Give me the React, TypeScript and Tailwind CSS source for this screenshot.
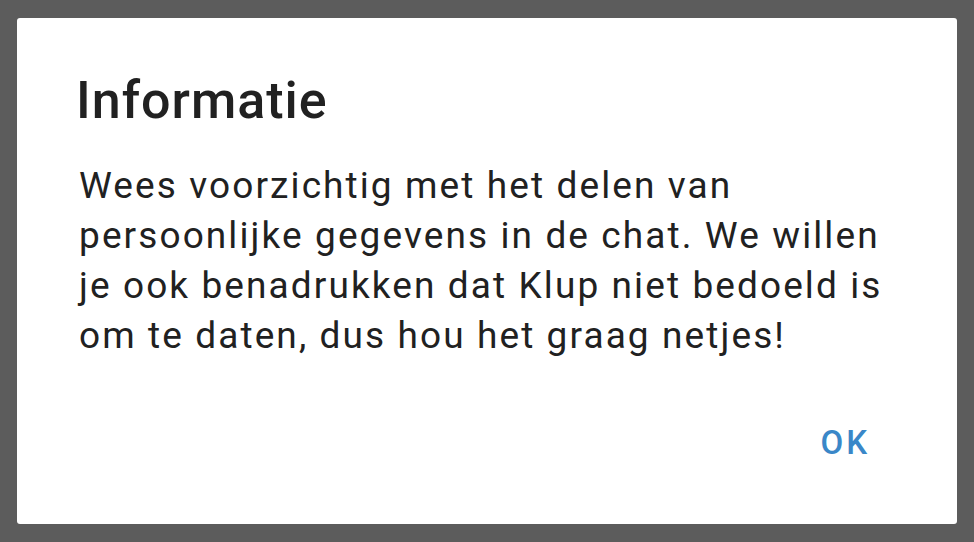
const lines = [
  "Wees voorzichtig met het delen van",
  "persoonlijke gegevens in de chat. We willen",
  "je ook benadrukken dat Klup niet bedoeld is",
  "om te daten, dus hou het graag netjes!",
];

export default function App() {
  return (
    <div className="w-[974px] h-[542px] bg-[#5c5c5c] pt-[18px] pl-[17px]">
      <div
        className="w-[940px] h-[506px] bg-white rounded-[3px] pt-[57px] pl-[62px] pr-[87px] flex flex-col"
        style={{ fontFamily: "Roboto, 'Noto Sans', sans-serif" }}
      >
        <h1 className="text-[52px] leading-[52px] font-medium tracking-[1px] text-[#212121] -ml-[3px]">
          Informatie
        </h1>
        <p className="mt-[34px] text-[37px] leading-[50px] tracking-[2.1px] text-[#212121] whitespace-nowrap">
          {lines.map((l) => (
            <span key={l} className="block">
              {l}
            </span>
          ))}
        </p>
        <button className="mt-[65px] self-end text-[33px] leading-[33px] font-medium tracking-[3px] text-[#3a87c8]">
          OK
        </button>
      </div>
    </div>
  );
}
